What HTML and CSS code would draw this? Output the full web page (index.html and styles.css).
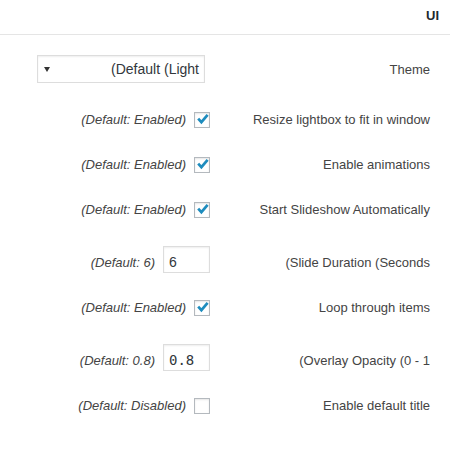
FILE: index.html
```html
<!DOCTYPE html>
<html lang="en">
<head>
<meta charset="utf-8">
<title>UI</title>
<link rel="stylesheet" href="styles.css">
</head>
<body>
<div class="section-title">UI</div>
<div class="form">
  <div class="row row-select">
    <div class="control">
      <div class="select">
        <svg class="arrow" width="6" height="5" viewBox="0 0 6 5"><polygon points="0,0 6,0 3,5" fill="#333"/></svg>
        <span class="value">(Default (Light</span>
      </div>
    </div>
    <div class="label">Theme</div>
  </div>
  <div class="row">
    <div class="control">
      <span class="desc">(Default: Enabled)</span>
      <span class="checkbox"><svg width="14" height="14" viewBox="0 0 14 14"><path d="M3.2 5.6 L6.4 9.2 L12.6 1.8" fill="none" stroke="#1e8cbe" stroke-width="2.7"/></svg></span>
    </div>
    <div class="label">Resize lightbox to fit in window</div>
  </div>
  <div class="row">
    <div class="control">
      <span class="desc">(Default: Enabled)</span>
      <span class="checkbox"><svg width="14" height="14" viewBox="0 0 14 14"><path d="M3.2 5.6 L6.4 9.2 L12.6 1.8" fill="none" stroke="#1e8cbe" stroke-width="2.7"/></svg></span>
    </div>
    <div class="label">Enable animations</div>
  </div>
  <div class="row">
    <div class="control">
      <span class="desc">(Default: Enabled)</span>
      <span class="checkbox"><svg width="14" height="14" viewBox="0 0 14 14"><path d="M3.2 5.6 L6.4 9.2 L12.6 1.8" fill="none" stroke="#1e8cbe" stroke-width="2.7"/></svg></span>
    </div>
    <div class="label">Start Slideshow Automatically</div>
  </div>
  <div class="row row-input">
    <div class="control">
      <span class="desc">(Default: 6)</span>
      <input class="field" type="text" value="6">
    </div>
    <div class="label">(Slide Duration (Seconds</div>
  </div>
  <div class="row">
    <div class="control">
      <span class="desc">(Default: Enabled)</span>
      <span class="checkbox"><svg width="14" height="14" viewBox="0 0 14 14"><path d="M3.2 5.6 L6.4 9.2 L12.6 1.8" fill="none" stroke="#1e8cbe" stroke-width="2.7"/></svg></span>
    </div>
    <div class="label">Loop through items</div>
  </div>
  <div class="row row-input">
    <div class="control">
      <span class="desc">(Default: 0.8)</span>
      <input class="field field-mono" type="text" value="0.8">
    </div>
    <div class="label">(Overlay Opacity (0 - 1</div>
  </div>
  <div class="row">
    <div class="control">
      <span class="desc">(Default: Disabled)</span>
      <span class="checkbox"></span>
    </div>
    <div class="label">Enable default title</div>
  </div>
</div>
</body>
</html>
```
FILE: styles.css
```css
body {
  margin: 0;
  font-family: "Liberation Sans", Arial, sans-serif;
  font-size: 13px;
  color: #444;
  background: #fff;
}

.section-title {
  padding: 8px 11px 11px;
  text-align: right;
  font-weight: bold;
  line-height: 15px;
  color: #23282d;
  border-bottom: 1px solid #e5e5e5;
}

.form {
  padding-top: 6px;
}

.row {
  display: flex;
  align-items: center;
  padding: 14px 20px 14px 0;
}

.row-input {
  align-items: baseline;
  padding-bottom: 12px;
}

.control {
  width: 210px;
  flex: none;
  display: flex;
  align-items: center;
  justify-content: flex-end;
  gap: 8px;
}

.row-input .control {
  align-items: baseline;
}

.label {
  flex: 1;
  text-align: right;
  line-height: 17px;
}

.desc {
  font-style: italic;
  color: #444;
  line-height: 17px;
}

.checkbox {
  width: 16px;
  height: 16px;
  box-sizing: border-box;
  border: 1px solid #b4b9be;
  background: #fff;
  box-shadow: inset 0 1px 2px rgba(0, 0, 0, 0.1);
  display: flex;
  align-items: center;
  justify-content: center;
}

.select {
  width: 168px;
  height: 28px;
  box-sizing: border-box;
  margin-right: 5px;
  border: 1px solid #ddd;
  background: #fff;
  box-shadow: inset 0 1px 2px rgba(0, 0, 0, 0.07);
  display: flex;
  align-items: center;
  justify-content: space-between;
  padding: 0 5px 0 6px;
  font-size: 14px;
  color: #32373c;
}

.arrow {
  display: block;
}

.field {
  width: 47px;
  height: 27px;
  box-sizing: border-box;
  margin: 0;
  border: 1px solid #ddd;
  border-radius: 0;
  background: #fff;
  box-shadow: inset 0 1px 2px rgba(0, 0, 0, 0.07);
  padding: 4px 5px 0;
  font: 14px "Liberation Sans", Arial, sans-serif;
  color: #32373c;
  outline: none;
}

.field-mono {
  font-family: "DejaVu Sans Mono", monospace;
}
```
